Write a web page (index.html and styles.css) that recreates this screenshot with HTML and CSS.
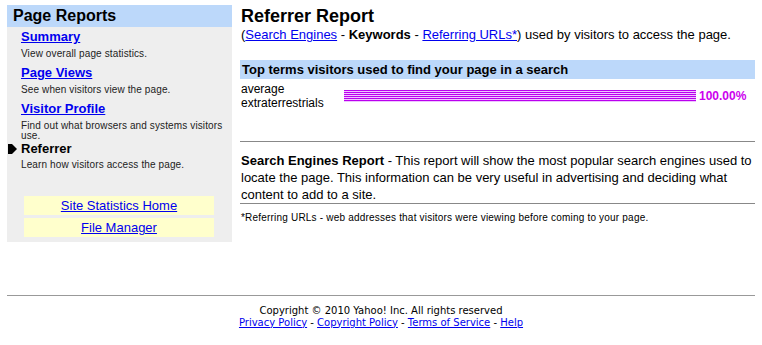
FILE: index.html
```html
<!DOCTYPE html>
<html lang="en">
<head>
    <meta charset="UTF-8">
    <title>Referrer Report</title>
    <link rel="stylesheet" href="styles.css">
</head>
<body>
    <div class="page">
        <div class="layout">
            <div class="sidebar">
                <div class="side-head">Page Reports</div>
                <ul class="report-list">
                    <li class="report-item">
                        <a href="#" class="report-link">Summary</a>
                        <p class="report-desc">View overall page statistics.</p>
                    </li>
                    <li class="report-item">
                        <a href="#" class="report-link">Page Views</a>
                        <p class="report-desc">See when visitors view the page.</p>
                    </li>
                    <li class="report-item">
                        <a href="#" class="report-link">Visitor Profile</a>
                        <p class="report-desc">Find out what browsers and systems visitors use.</p>
                    </li>
                    <li class="report-item current">
                        <span class="report-current">
                            <svg class="arrow" width="9" height="10" viewBox="0 0 9 10"><polygon points="0,0 4,0 9,5 4,10 0,10"/></svg>
                            Referrer
                        </span>
                        <p class="report-desc">Learn how visitors access the page.</p>
                    </li>
                </ul>
                <div class="side-buttons">
                    <div class="side-button"><a href="#">Site Statistics Home</a></div>
                    <div class="side-button"><a href="#">File Manager</a></div>
                </div>
            </div>

            <div class="main">
                <h1 class="title">Referrer Report</h1>
                <p class="subtitle">(<a href="#">Search Engines</a> - <b>Keywords</b> - <a href="#">Referring URLs*</a>) used by visitors to access the page.</p>

                <div class="section-head">Top terms visitors used to find your page in a search</div>
                <div class="term-row">
                    <div class="term-label">average<br>extraterrestrials</div>
                    <div class="term-bar"><div class="bar-fill" style="width: 100%"></div></div>
                    <div class="term-pct">100.00%</div>
                </div>

                <hr class="rule rule-top">
                <p class="about"><b>Search Engines Report</b> - This report will show the most popular search engines used to locate the page. This information can be very useful in advertising and deciding what content to add to a site.</p>
                <hr class="rule">
                <p class="footnote">*Referring URLs - web addresses that visitors were viewing before coming to your page.</p>
            </div>
        </div>

        <div class="footer">
            <div>Copyright &copy; 2010 Yahoo! Inc. All rights reserved</div>
            <div><a href="#">Privacy Policy</a> - <a href="#">Copyright Policy</a> - <a href="#">Terms of Service</a> - <a href="#">Help</a></div>
        </div>
    </div>
</body>
</html>
```

FILE: styles.css
```css
body {
    margin: 0;
    font-family: "Liberation Sans", Arial, sans-serif;
    color: #000;
}
a {
    color: #00e;
}
.page {
    padding: 5px 7px 0 7px;
}
.layout {
    display: flex;
    align-items: flex-start;
    gap: 8px;
}
.sidebar {
    flex: none;
    width: 225px;
    background-color: #eeeeee;
    padding-bottom: 5px;
}
.side-head {
    background-color: #bcd8fa;
    font-size: 16px;
    font-weight: bold;
    line-height: 22px;
    padding-left: 6px;
}
.report-list {
    list-style: none;
    margin: 0;
    padding: 2px 0 0 14px;
}
.report-item {
    margin-bottom: 6px;
}
.report-link,
.report-current {
    display: block;
    font-size: 13px;
    font-weight: bold;
    line-height: 16px;
}
.report-current {
    position: relative;
}
.arrow {
    position: absolute;
    left: -13px;
    top: 3px;
}
.report-desc {
    margin: 4px 0 0 0;
    font-size: 10px;
    line-height: 10px;
    letter-spacing: 0.12px;
    color: #222;
}
.report-item.current {
    margin-top: -6px;
}
.report-item.current .report-desc {
    margin-top: 3px;
}
.side-buttons {
    margin: 26px 18px 0 17px;
    display: flex;
    flex-direction: column;
    gap: 3px;
}
.side-button {
    background-color: #ffffcc;
    text-align: center;
    font-size: 13px;
    line-height: 19px;
}
.main {
    flex: 1;
    padding-top: 1px;
}
.title {
    margin: 0;
    font-size: 18px;
    line-height: 21px;
    padding-left: 1px;
}
.subtitle {
    margin: 0;
    font-size: 13px;
    line-height: 15px;
    padding-left: 1px;
}
.section-head {
    margin-top: 18px;
    background-color: #bcd8fa;
    font-size: 13px;
    font-weight: bold;
    line-height: 19px;
    padding-left: 2px;
}
.term-row {
    display: flex;
    align-items: center;
    padding: 3px 0 0 1px;
}
.term-label {
    width: 103px;
    font-size: 12px;
    line-height: 14px;
}
.term-bar {
    width: 352px;
}
.bar-fill {
    height: 12px;
    background: repeating-linear-gradient(to bottom, #bb00ee 0, #bb00ee 1px, #eec4ff 1px, #eec4ff 2px);
}
.term-pct {
    margin-left: 3px;
    font-size: 12px;
    font-weight: bold;
    color: #cc00ee;
}
.rule {
    border: none;
    border-top: 1px solid #888;
    margin: 0;
}
.rule-top {
    margin-top: 31px;
}
.about {
    margin: 10px 0 0 0;
    font-size: 13px;
    line-height: 17px;
    padding-left: 1px;
}
.footnote {
    margin: 8px 0 0 0;
    font-size: 10px;
    line-height: 12px;
    letter-spacing: 0.2px;
    padding-left: 1px;
}
.footer {
    margin-top: 53px;
    border-top: 1px solid #999;
    padding-top: 9px;
    text-align: center;
    font-family: "DejaVu Sans", Verdana, sans-serif;
    font-size: 10px;
    line-height: 11.5px;
}
```
